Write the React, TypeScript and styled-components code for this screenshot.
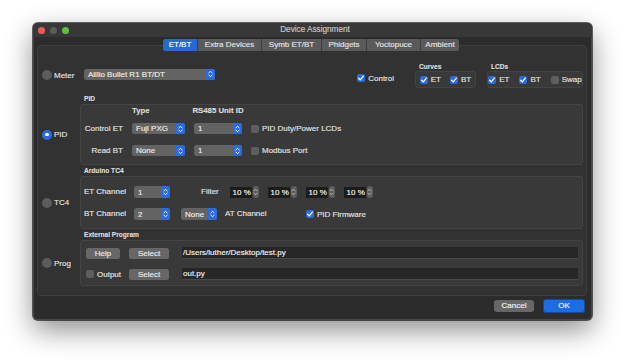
import React from 'react';
import styled, { createGlobalStyle } from 'styled-components';

const Global = createGlobalStyle`
  html, body { margin: 0; padding: 0; background: #ffffff; }
  body {
    font-family: "Liberation Sans", Arial, sans-serif;
    font-size: 8px;
    color: #e2e2e2;
    -webkit-text-stroke: 0.15px currentColor;
  }
  * { box-sizing: border-box; }
`;

const Page = styled.div`
  width: 625px;
  height: 364px;
  padding: 23px 0 0 33px;
  background: #ffffff;
`;

const Window = styled.div`
  width: 559px;
  height: 297px;
  background: #2c2c2c;
  border-radius: 5px;
  box-shadow: 0 0 0 1px rgba(0, 0, 0, 0.6), 0 10px 28px rgba(0, 0, 0, 0.45),
    inset 0 1px 0 #5a5a5a, inset 1px 0 0 #474747, inset -1px 0 0 #474747, inset 0 -1px 0 #474747;
  display: flex;
  flex-direction: column;
  overflow: hidden;
`;

const TitleBar = styled.div`
  height: 14px;
  flex: none;
  background: #383838;
  display: grid;
  grid-template-columns: 1fr auto 1fr;
  align-items: center;
  padding-left: 5px;
`;

const Lights = styled.div`
  display: flex;
  gap: 5px;
  align-items: center;
`;

const Light = styled.span<{ $c: string }>`
  width: 7px;
  height: 7px;
  border-radius: 50%;
  background: ${(p) => p.$c};
`;

const Title = styled.div`
  font-size: 8.2px;
  color: #c9c9c9;
  line-height: 14px;
`;

const Body = styled.div`
  flex: 1;
  display: flex;
  flex-direction: column;
  padding: 0 5px 0 4px;
`;

const TabBar = styled.div`
  margin-top: 2px;
  height: 12px;
  display: flex;
  justify-content: center;
  position: relative;
  z-index: 1;
  padding-right: 2px;
`;

const Tab = styled.div<{ $w: number; $active?: boolean }>`
  width: ${(p) => p.$w}px;
  height: 12px;
  line-height: 12px;
  text-align: center;
  font-size: 8px;
  white-space: nowrap;
  color: ${(p) => (p.$active ? '#ffffff' : '#e4e4e4')};
  background: ${(p) => (p.$active ? '#2867d6' : '#5a5a5a')};
  border-left: 1px solid ${(p) => (p.$active ? '#2867d6' : '#3e3e3e')};
  &:first-child { border-radius: 2.5px 0 0 2.5px; border-left: none; }
  &:last-child { border-radius: 0 2.5px 2.5px 0; }
`;

const Pane = styled.div`
  margin-top: -6px;
  height: 251px;
  background: #323232;
  border: 1px solid #3e3e3e;
  border-radius: 4px;
  padding: 16px 3px 7px 4px;
  display: flex;
  flex-direction: column;
`;

const Section = styled.div<{ $gap: number }>`
  display: grid;
  grid-template-columns: 38px 1fr;
  margin-top: ${(p) => p.$gap}px;
`;

const GroupTitle = styled.div`
  grid-column: 2;
  height: 10px;
  line-height: 10px;
  font-size: 6.6px;
  font-weight: 700;
  color: #dcdcdc;
  padding-left: 4px;
  white-space: nowrap;
`;

const GroupBox = styled.div`
  background: #393939;
  border: 1px solid #444444;
  border-radius: 3px;
`;

const RadioOpt = styled.label`
  grid-column: 1;
  align-self: center;
  display: flex;
  align-items: center;
  gap: 2px;
  font-size: 8px;
  color: #e2e2e2;
`;

const RadioDot = styled.span<{ $on?: boolean }>`
  width: 10px;
  height: 10px;
  border-radius: 50%;
  background: ${(p) => (p.$on ? '#2a6ce0' : '#5c5c5c')};
  display: flex;
  align-items: center;
  justify-content: center;
  &::after {
    content: '';
    width: 3.5px;
    height: 3.5px;
    border-radius: 50%;
    background: ${(p) => (p.$on ? '#ffffff' : 'transparent')};
  }
`;

const MeterRow = styled.div`
  grid-column: 2;
  height: 26px;
  display: flex;
  align-items: center;
`;

const MeterCombo = styled.div`
  margin-left: 4px;
  margin-top: -2px;
  flex: 1;
`;

const ControlSlot = styled.div`
  margin-top: 6px;
  margin-right: 21px;
`;

const MiniGroup = styled.div<{ $w: number; $mr?: number }>`
  width: ${(p) => p.$w}px;
  margin-right: ${(p) => p.$mr ?? 0}px;
  display: flex;
  flex-direction: column;
`;

const MiniTitle = styled.div`
  height: 9px;
  line-height: 9px;
  font-size: 6.6px;
  font-weight: 700;
  color: #dcdcdc;
  padding-left: 4px;
`;

const MiniBox = styled(GroupBox)<{ $gap: number }>`
  height: 17px;
  display: flex;
  align-items: center;
  justify-content: center;
  gap: ${(p) => p.$gap}px;
`;

const Check = styled.label`
  display: flex;
  align-items: center;
  gap: 3px;
  font-size: 8px;
  line-height: 11px;
  color: #e2e2e2;
  white-space: nowrap;
`;

const CheckBox = styled.span<{ $on?: boolean }>`
  width: 8px;
  height: 8px;
  border-radius: 2px;
  background: ${(p) => (p.$on ? '#2a6ce0' : '#5e5e5e')};
  display: flex;
  align-items: center;
  justify-content: center;
  flex: none;
`;

const ComboBox = styled.div<{ $w?: number; $h: number }>`
  width: ${(p) => (p.$w ? `${p.$w}px` : '100%')};
  height: ${(p) => p.$h}px;
  border-radius: 2.5px;
  background: #636363;
  display: flex;
  align-items: stretch;
  overflow: hidden;
  flex: none;
`;

const ComboText = styled.span`
  flex: 1;
  padding-left: 4px;
  font-size: 8px;
  color: #ededed;
  display: flex;
  align-items: center;
  white-space: nowrap;
`;

const ComboArrows = styled.span`
  width: 9px;
  background: #2a6ce0;
  display: flex;
  align-items: center;
  justify-content: center;
`;

const PidGrid = styled.div`
  display: grid;
  grid-template-columns: 39px 53px 48px auto;
  grid-template-rows: 17px 22px 11px;
  column-gap: 9px;
  align-items: start;
  padding: 1px 0 8px 3px;
`;

const ColHead = styled.div<{ $center?: boolean }>`
  justify-self: ${(p) => (p.$center ? 'center' : 'start')};
  font-size: 7.8px;
  font-weight: 700;
  line-height: 9px;
  color: #dcdcdc;
  white-space: nowrap;
`;

const RowLabel = styled.div`
  justify-self: end;
  font-size: 8px;
  line-height: 11px;
  color: #e2e2e2;
  white-space: nowrap;
`;

const TcBody = styled.div`
  display: flex;
  flex-direction: column;
  gap: 10px;
  padding: 9px 0 8px 3px;
`;

const TcRow = styled.div`
  height: 12px;
  display: flex;
  align-items: center;
`;

const Label = styled.span<{ $w?: number; $ml?: number; $mr?: number }>`
  width: ${(p) => (p.$w ? `${p.$w}px` : 'auto')};
  margin-left: ${(p) => p.$ml ?? 0}px;
  margin-right: ${(p) => p.$mr ?? 0}px;
  font-size: 8px;
  line-height: 12px;
  color: #e2e2e2;
  white-space: nowrap;
  flex: none;
`;

const Gap = styled.span<{ $w: number }>`
  width: ${(p) => p.$w}px;
  flex: none;
`;

const Spins = styled.div`
  display: flex;
  gap: 9px;
  margin-left: 11px;
`;

const Spin = styled.div`
  display: flex;
  align-items: center;
  gap: 1px;
`;

const SpinField = styled.span`
  width: 22px;
  height: 11px;
  background: #1c1c1c;
  color: #f4f4f4;
  font-size: 8px;
  line-height: 11px;
  text-align: right;
  padding-right: 1px;
  white-space: nowrap;
`;

const SpinStep = styled.span`
  width: 6px;
  height: 12px;
  border-radius: 3px;
  background: #5d5d5d;
  display: flex;
  align-items: center;
  justify-content: center;
`;

const ExtBody = styled.div`
  display: flex;
  flex-direction: column;
  gap: 9px;
  padding: 6px 4px 5px 5px;
`;

const ExtRow = styled.div`
  height: 12px;
  display: flex;
  align-items: center;
`;

const Slot = styled.div`
  width: 43px;
  flex: none;
  display: flex;
  align-items: center;
`;

const Button = styled.div<{ $w: number }>`
  width: ${(p) => p.$w}px;
  height: 11px;
  border-radius: 2.5px;
  background: #676767;
  color: #ebebeb;
  font-size: 8px;
  line-height: 11px;
  text-align: center;
  flex: none;
`;

const Field = styled.div`
  flex: 1;
  height: 12px;
  margin-left: 13px;
  background: #272727;
  border-bottom: 1px solid #474747;
  color: #f2f2f2;
  font-size: 8px;
  line-height: 12px;
  padding-left: 1px;
  white-space: nowrap;
`;

const Footer = styled.div`
  flex: 1;
  display: flex;
  justify-content: flex-end;
  align-items: flex-start;
  gap: 9px;
  padding: 3px 2px 0 0;
`;

const DlgButton = styled.div<{ $w: number; $primary?: boolean }>`
  width: ${(p) => p.$w}px;
  height: ${(p) => (p.$primary ? 14 : 12)}px;
  margin-top: ${(p) => (p.$primary ? 0 : 1)}px;
  border-radius: 3px;
  background: ${(p) => (p.$primary ? '#1c6de4' : '#676767')};
  border: ${(p) => (p.$primary ? '1px solid #134c9e' : 'none')};
  color: #f4f4f4;
  font-size: 8px;
  line-height: 12px;
  text-align: center;
`;

const Tick = () => (
  <svg width="8" height="8" viewBox="0 0 8 8">
    <path d="M1.7 4.2 L3.3 5.9 L6.3 2.1" fill="none" stroke="#ffffff" strokeWidth="1.3" strokeLinecap="round" strokeLinejoin="round" />
  </svg>
);

const UpDown = ({ color = '#ffffff' }: { color?: string }) => (
  <svg width="5" height="8" viewBox="0 0 5 8">
    <path d="M0.8 3 L2.5 1.2 L4.2 3 M0.8 5 L2.5 6.8 L4.2 5" fill="none" stroke={color} strokeWidth="0.9" strokeLinecap="round" strokeLinejoin="round" />
  </svg>
);

const Combo = ({ value, w, h = 11 }: { value: string; w?: number; h?: number }) => (
  <ComboBox $w={w} $h={h}>
    <ComboText>{value}</ComboText>
    <ComboArrows>
      <UpDown />
    </ComboArrows>
  </ComboBox>
);

const CheckItem = ({ label, on }: { label: string; on?: boolean }) => (
  <Check>
    <CheckBox $on={on}>{on && <Tick />}</CheckBox>
    {label}
  </Check>
);

const Radio = ({ label, on }: { label: string; on?: boolean }) => (
  <RadioOpt>
    <RadioDot $on={on} />
    {label}
  </RadioOpt>
);

const SpinBox = ({ value }: { value: string }) => (
  <Spin>
    <SpinField>{value}</SpinField>
    <SpinStep>
      <UpDown color="#bdbdbd" />
    </SpinStep>
  </Spin>
);

const tabs = [
  { label: 'ET/BT', w: 34, active: true },
  { label: 'Extra Devices', w: 64 },
  { label: 'Symb ET/BT', w: 60 },
  { label: 'Phidgets', w: 45 },
  { label: 'Yoctopuce', w: 54 },
  { label: 'Ambient', w: 39 },
];

export default function App() {
  return (
    <Page>
      <Global />
      <Window>
        <TitleBar>
          <Lights>
            <Light $c="#ec5b55" />
            <Light $c="#5b5b5b" />
            <Light $c="#5ec13f" />
          </Lights>
          <Title>Device Assignment</Title>
          <span />
        </TitleBar>
        <Body>
          <TabBar>
            {tabs.map((t) => (
              <Tab key={t.label} $w={t.w} $active={t.active}>
                {t.label}
              </Tab>
            ))}
          </TabBar>
          <Pane>
            <Section $gap={0}>
              <Radio label="Meter" />
              <MeterRow>
                <MeterCombo>
                  <Combo value="Aillio Bullet R1 BT/DT" w={131} />
                </MeterCombo>
                <ControlSlot>
                  <CheckItem label="Control" on />
                </ControlSlot>
                <MiniGroup $w={61} $mr={11}>
                  <MiniTitle>Curves</MiniTitle>
                  <MiniBox $gap={9}>
                    <CheckItem label="ET" on />
                    <CheckItem label="BT" on />
                  </MiniBox>
                </MiniGroup>
                <MiniGroup $w={96}>
                  <MiniTitle>LCDs</MiniTitle>
                  <MiniBox $gap={10}>
                    <CheckItem label="ET" on />
                    <CheckItem label="BT" on />
                    <CheckItem label="Swap" />
                  </MiniBox>
                </MiniGroup>
              </MeterRow>
            </Section>

            <Section $gap={6}>
              <GroupTitle>PID</GroupTitle>
              <Radio label="PID" on />
              <GroupBox>
                <PidGrid>
                  <span />
                  <ColHead>Type</ColHead>
                  <ColHead $center>RS485 Unit ID</ColHead>
                  <span />
                  <RowLabel>Control ET</RowLabel>
                  <Combo value="Fuji PXG" w={53} />
                  <Combo value="1" w={48} />
                  <CheckItem label="PID Duty/Power LCDs" />
                  <RowLabel>Read BT</RowLabel>
                  <Combo value="None" w={53} />
                  <Combo value="1" w={48} />
                  <CheckItem label="Modbus Port" />
                </PidGrid>
              </GroupBox>
            </Section>

            <Section $gap={1}>
              <GroupTitle>Arduino TC4</GroupTitle>
              <Radio label="TC4" />
              <GroupBox>
                <TcBody>
                  <TcRow>
                    <Label $w={42} $mr={8}>ET Channel</Label>
                    <Combo value="1" w={36} h={12} />
                    <Label $ml={31}>Filter</Label>
                    <Spins>
                      <SpinBox value="10 %" />
                      <SpinBox value="10 %" />
                      <SpinBox value="10 %" />
                      <SpinBox value="10 %" />
                    </Spins>
                  </TcRow>
                  <TcRow>
                    <Label $w={42} $mr={8}>BT Channel</Label>
                    <Combo value="2" w={36} h={12} />
                    <Gap $w={11} />
                    <Combo value="None" w={36} h={12} />
                    <Label $w={41} $ml={8} $mr={40}>AT Channel</Label>
                    <CheckItem label="PID Firmware" on />
                  </TcRow>
                </TcBody>
              </GroupBox>
            </Section>

            <Section $gap={1}>
              <GroupTitle>External Program</GroupTitle>
              <Radio label="Prog" />
              <GroupBox>
                <ExtBody>
                  <ExtRow>
                    <Slot>
                      <Button $w={34}>Help</Button>
                    </Slot>
                    <Button $w={40}>Select</Button>
                    <Field>/Users/luther/Desktop/test.py</Field>
                  </ExtRow>
                  <ExtRow>
                    <Slot>
                      <CheckItem label="Output" />
                    </Slot>
                    <Button $w={40}>Select</Button>
                    <Field>out.py</Field>
                  </ExtRow>
                </ExtBody>
              </GroupBox>
            </Section>
          </Pane>
          <Footer>
            <DlgButton $w={40}>Cancel</DlgButton>
            <DlgButton $w={42} $primary>
              OK
            </DlgButton>
          </Footer>
        </Body>
      </Window>
    </Page>
  );
}
